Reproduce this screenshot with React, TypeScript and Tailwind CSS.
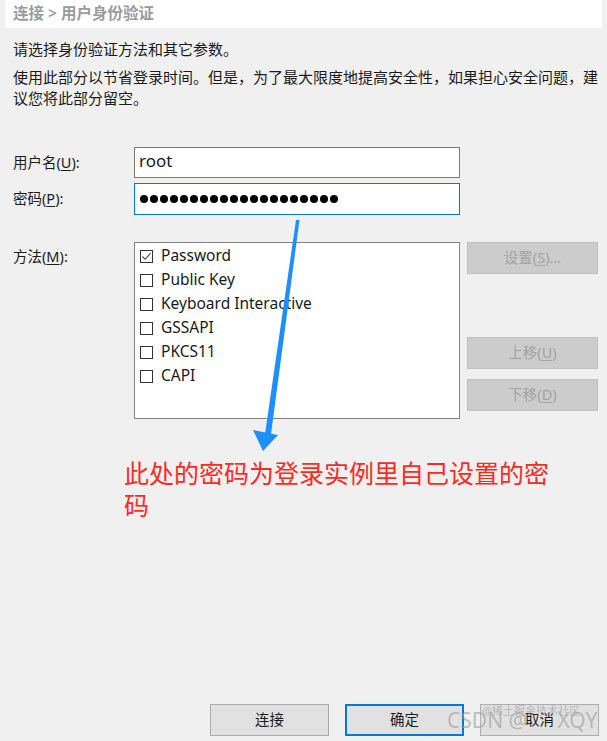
import React from "react";

const font = "font-['Noto_Sans','Noto_Sans_CJK_SC',sans-serif]";

function Mnemonic({ text, k, rest }: { text: string; k: string; rest: string }) {
	return (
		<span>
			{text}(<span className="underline underline-offset-2">{k}</span>){rest}
		</span>
	);
}

function Check({ checked }: { checked?: boolean }) {
	return (
		<span className="w-[13px] h-[13px] border border-[#333333] bg-white flex items-center justify-center shrink-0">
			{checked && (
				<svg width="11" height="11" viewBox="0 0 11 11">
					<path d="M1.5 5.5 L4.2 8.3 L9.5 2.2" fill="none" stroke="#444" strokeWidth="1.1" />
				</svg>
			)}
		</span>
	);
}

function SideButton({ label, k, rest }: { label: string; k: string; rest: string }) {
	return (
		<div className="w-[131px] h-[32px] bg-[#cccccc] border border-[#bfbfbf] flex items-center justify-center text-[14.5px] text-[#a3a3a3]">
			<Mnemonic text={label} k={k} rest={rest} />
		</div>
	);
}

export default function App() {
	const methods = [
		{ name: "Password", checked: true },
		{ name: "Public Key" },
		{ name: "Keyboard Interactive" },
		{ name: "GSSAPI" },
		{ name: "PKCS11" },
		{ name: "CAPI" },
	];

	return (
		<div className={`relative w-[607px] h-[741px] bg-[#f0f0f0] overflow-hidden flex flex-col text-[#1a1a1a] ${font}`}>
			<header className="mx-[5px] h-[28px] bg-white pl-[8px] flex items-center text-[15.5px] font-semibold text-[#9b9b9b]">
				连接 &gt; 用户身份验证
			</header>

			<div className="px-[13px] text-[15px] leading-[21px] whitespace-nowrap">
				<p className="mt-[11px]">请选择身份验证方法和其它参数。</p>
				<p className="mt-[7px]">
					使用此部分以节省登录时间。但是，为了最大限度地提高安全性，如果担心安全问题，建
					<br />
					议您将此部分留空。
				</p>
			</div>

			<div className="mt-[38px] pl-[13px] flex flex-col gap-[5px] text-[14.5px]">
				<div className="flex items-center">
					<label className="w-[121px]">
						<Mnemonic text="用户名" k="U" rest=":" />
					</label>
					<div className="w-[326px] h-[31px] bg-white border border-[#7a7a7a] flex items-center px-[4px] text-[17px] pb-[3px]">
						root
					</div>
				</div>
				<div className="flex items-center">
					<label className="w-[121px]">
						<Mnemonic text="密码" k="P" rest=":" />
					</label>
					<div className="w-[326px] h-[32px] bg-white border border-[#0078d7] flex items-center pl-[5px] gap-[2px]">
						{Array.from({ length: 20 }).map((_, i) => (
							<span key={i} className="w-[8px] h-[8px] rounded-full bg-black" />
						))}
					</div>
				</div>
			</div>

			<div className="mt-[27px] pl-[13px] flex items-start">
				<label className="w-[121px] mt-[4px] text-[14.5px]">
					<Mnemonic text="方法" k="M" rest=":" />
				</label>
				<div className="w-[326px] h-[177px] bg-white border border-[#828282] pt-[1px] pl-[5px] flex flex-col">
					{methods.map((m) => (
						<div key={m.name} className="h-[24px] flex items-center gap-[8px] text-[15.5px]">
							<Check checked={m.checked} />
							<span>{m.name}</span>
						</div>
					))}
				</div>
				<div className="ml-[7px] flex flex-col">
					<SideButton label="设置" k="S" rest="..." />
					<div className="mt-[63px] flex flex-col gap-[10px]">
						<SideButton label="上移" k="U" rest="" />
						<SideButton label="下移" k="D" rest="" />
					</div>
				</div>
			</div>

			<p className="mt-[38px] pl-[124px] pr-[40px] text-[25px] leading-[32px] text-[#ff2a1f]">
				此处的密码为登录实例里自己设置的密码
			</p>

			<div className="mt-auto mb-[5px] pr-[8px] flex justify-end gap-[16px] text-[14.5px]">
				<button className="w-[119px] h-[32px] bg-[#e1e1e1] border border-[#adadad]">连接</button>
				<button className="w-[119px] h-[32px] bg-[#e1e1e1] border-2 border-[#0078d7]">确定</button>
				<button className="w-[119px] h-[32px] bg-[#e1e1e1] border border-[#adadad]">取消</button>
			</div>

			<svg className="absolute inset-0 pointer-events-none" width="607" height="741" viewBox="0 0 607 741">
				<polygon points="296,220 299.5,220 271,434 265,434" fill="#1e8fff" />
				<polygon points="253,430 278,435 263,451" fill="#1e8fff" />
			</svg>

			<div className="absolute left-[447px] top-[706px] whitespace-nowrap text-[21px] leading-[28px] text-[#9a9a9a]/60 pointer-events-none">
				CSDN @<span className="ml-[30px]">XQY</span>
			</div>
			<div className="absolute left-[482px] top-[703px] whitespace-nowrap text-[11px] text-[#9a9a9a]/60 pointer-events-none">
				@稀土掘金技术社区
			</div>
		</div>
	);
}
